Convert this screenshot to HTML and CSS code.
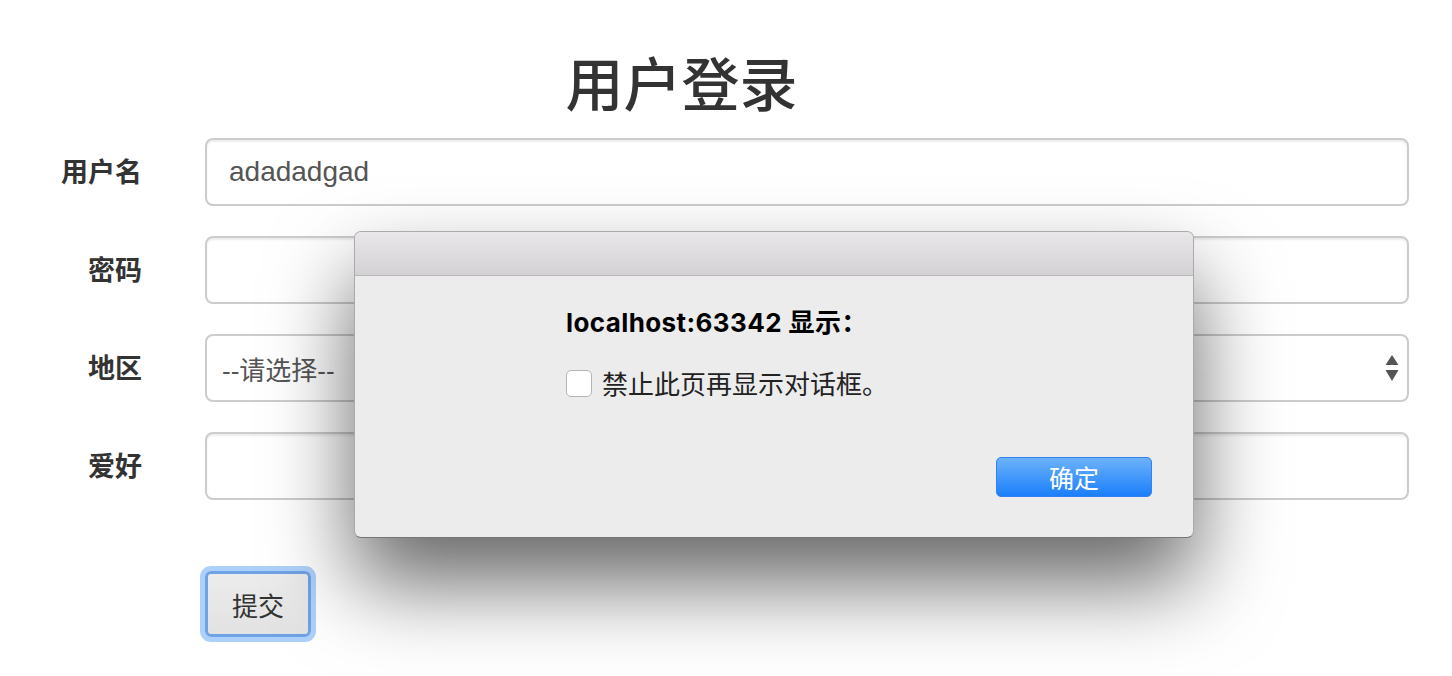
FILE: index.html
```html
<!DOCTYPE html>
<html lang="zh-CN">
<head>
<meta charset="utf-8">
<title>用户登录</title>
<link rel="stylesheet" href="styles.css">
</head>
<body>
<div class="page">
  <h1 class="title">用户登录</h1>
  <form class="form">
    <label class="label">用户名</label>
    <div class="control"><span class="value">adadadgad</span></div>
    <label class="label">密码</label>
    <div class="control"></div>
    <label class="label">地区</label>
    <div class="control select">
      <span class="placeholder">--请选择--</span>
      <svg class="arrows" width="14" height="28" viewBox="0 0 14 28"><path d="M7 0 L13.5 10 L0.5 10 Z" fill="#555"/><path d="M0.5 15 L13.5 15 L7 26 Z" fill="#555"/></svg>
    </div>
    <label class="label">爱好</label>
    <div class="control"></div>
    <div class="spacer"></div>
    <div class="actions"><button type="button" class="submit">提交</button></div>
  </form>

  <div class="dialog">
    <div class="dialog-bar"></div>
    <div class="dialog-body">
      <div class="dialog-msg">localhost:63342 显示：</div>
      <div class="dialog-check"><span class="box"></span><span>禁止此页再显示对话框。</span></div>
      <button type="button" class="ok">确定</button>
    </div>
  </div>
</div>
</body>
</html>
```
FILE: styles.css
```css
html, body {
  margin: 0;
  padding: 0;
  background: #fff;
}
body {
  font-family: "Liberation Sans", "Noto Sans CJK SC", sans-serif;
  color: #333;
  width: 1452px;
  height: 676px;
  overflow: hidden;
}
.page {
  position: relative;
  box-sizing: border-box;
  height: 676px;
  padding-top: 49px;
}
.title {
  margin: 0 89px 0 0;
  font-size: 58px;
  line-height: 64px;
  font-weight: 500;
  text-align: center;
  color: #333;
  font-family: "Noto Sans CJK SC", sans-serif;
}
.form {
  display: grid;
  grid-template-columns: 142px 1fr;
  column-gap: 63px;
  row-gap: 30px;
  align-items: center;
  margin: 25px 43px 0 0;
}
.label {
  text-align: right;
  font-size: 27px;
  font-weight: 700;
  color: #333;
  padding-bottom: 4px;
  font-family: "Noto Sans CJK SC", sans-serif;
}
.control {
  box-sizing: border-box;
  height: 68px;
  border: 2px solid #cccccc;
  border-radius: 8px;
  box-shadow: inset 0 2px 2px rgba(0,0,0,0.075);
  background: #fff;
  display: flex;
  align-items: center;
  padding: 0 22px;
  font-size: 28px;
  color: #555;
}
.select {
  padding: 0 8px 0 15px;
  justify-content: space-between;
  box-shadow: none;
}
.placeholder {
  font-size: 26px;
  color: #555;
}
.arrows {
  display: block;
  margin-top: 1px;
}
.spacer {
  height: 1px;
}
.actions {
  margin-top: 41px;
  display: flex;
}
.submit {
  box-sizing: border-box;
  width: 106px;
  height: 66px;
  border: 3px solid #6ea3e6;
  border-radius: 6px;
  background: linear-gradient(#ececec, #e2e2e2);
  box-shadow: 0 0 0 5px rgba(120,178,248,0.6);
  font-family: "Noto Sans CJK SC", sans-serif;
  font-size: 26px;
  color: #333;
  padding: 0;
}
.dialog {
  position: absolute;
  left: 354px;
  top: 231px;
  width: 840px;
  height: 307px;
  box-sizing: border-box;
  border: 1px solid rgba(0,0,0,0.28);
  border-bottom-color: rgba(0,0,0,0.5);
  border-radius: 7px;
  background: #ececec;
  box-shadow: 0 45px 85px rgba(0,0,0,0.6);
  display: flex;
  flex-direction: column;
  overflow: hidden;
}
.dialog-bar {
  height: 43px;
  flex: none;
  background: linear-gradient(#e9e7e9, #d3d1d3);
  border-bottom: 1px solid #b9b7b9;
}
.dialog-body {
  flex: 1;
  display: flex;
  flex-direction: column;
  padding: 31px 41px 40px 211px;
}
.dialog-msg {
  font-family: "Inter", "Noto Sans CJK SC", sans-serif;
  font-weight: 700;
  font-size: 26px;
  letter-spacing: 0.4px;
  line-height: 32px;
  color: #000;
}
.dialog-check {
  margin-top: 29px;
  display: flex;
  align-items: center;
  gap: 10px;
  font-family: "Noto Sans CJK SC", sans-serif;
  font-size: 26px;
  color: #222;
  line-height: 30px;
}
.box {
  box-sizing: border-box;
  width: 26px;
  height: 27px;
  border: 1px solid #b5b5b5;
  border-radius: 5px;
  background: #fff;
  flex: none;
}
.ok {
  margin-top: auto;
  align-self: flex-end;
  box-sizing: border-box;
  width: 156px;
  height: 40px;
  border: 1px solid #2f82ef;
  border-radius: 5px;
  background: linear-gradient(#6cb2fb, #1b7ffb);
  color: #fff;
  font-family: "Noto Sans CJK SC", sans-serif;
  font-size: 25px;
  padding: 0;
  line-height: 38px;
}
```
